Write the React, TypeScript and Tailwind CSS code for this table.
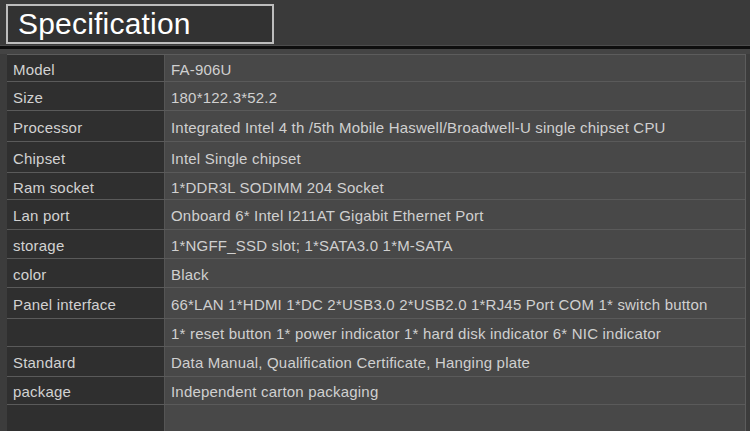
import React from "react";

const rows: [string, string, number][] = [
  ["Model", "FA-906U", 27],
  ["Size", "180*122.3*52.2", 29],
  ["Processor", "Integrated Intel 4 th /5th Mobile Haswell/Broadwell-U single chipset CPU", 31],
  ["Chipset", "Intel Single chipset", 31],
  ["Ram socket", "1*DDR3L SODIMM 204 Socket", 27],
  ["Lan port", "Onboard 6* Intel I211AT Gigabit Ethernet Port", 30],
  ["storage", "1*NGFF_SSD slot; 1*SATA3.0 1*M-SATA", 29],
  ["color", "Black", 29],
  ["Panel interface", "66*LAN 1*HDMI 1*DC 2*USB3.0 2*USB2.0 1*RJ45 Port COM 1* switch button", 31],
  ["", "1* reset button 1* power indicator 1* hard disk indicator 6* NIC indicator", 28],
  ["Standard", "Data Manual, Qualification Certificate, Hanging plate", 30],
  ["package", "Independent carton packaging", 28],
];

export default function App() {
  return (
    <div
      className="w-[750px] h-[431px] overflow-hidden bg-[#434343] flex flex-col"
      style={{ fontFamily: '"Liberation Sans", Arial, sans-serif' }}
    >
      <div className="h-[45px] bg-[#3a3a3a] pt-[4px] pl-[6px] shrink-0">
        <div className="w-[268px] h-[40px] border-2 border-[#bdbdbd] bg-[#323232] flex items-center pl-[10px]">
          <span className="text-[30px] leading-none text-white tracking-[0.2px]">Specification</span>
        </div>
      </div>
      <div className="h-[1px] bg-[#4c4c4c] shrink-0" />
      <div className="h-[3px] bg-[#0e0e0e] shrink-0" />
      <div className="h-[5px] bg-[#444444] shrink-0" />
      <div className="flex-1 flex pl-[7px] pr-[4px] bg-[#3c3c3c]">
        <div className="flex-1 flex flex-col border-t border-r border-[#5c5c5c] bg-[#484848]">
          {rows.map(([label, value, h], i) => (
            <div key={i} className="flex border-b border-[#5a5a5a]" style={{ height: h }}>
              <div className="w-[158px] shrink-0 bg-[#2f2f2f] border-r border-[#555555] flex items-center pl-[6px] pt-[4px] text-[15px] tracking-[0.2px] text-[#d2d2d2]">
                {label}
              </div>
              <div className="flex-1 flex items-center pl-[6px] pt-[4px] text-[15px] tracking-[0.2px] text-[#d0d0d0] whitespace-nowrap">
                {value}
              </div>
            </div>
          ))}
          <div className="flex flex-1">
            <div className="w-[158px] shrink-0 bg-[#2f2f2f] border-r border-[#555555]" />
            <div className="flex-1" />
          </div>
        </div>
      </div>
    </div>
  );
}
